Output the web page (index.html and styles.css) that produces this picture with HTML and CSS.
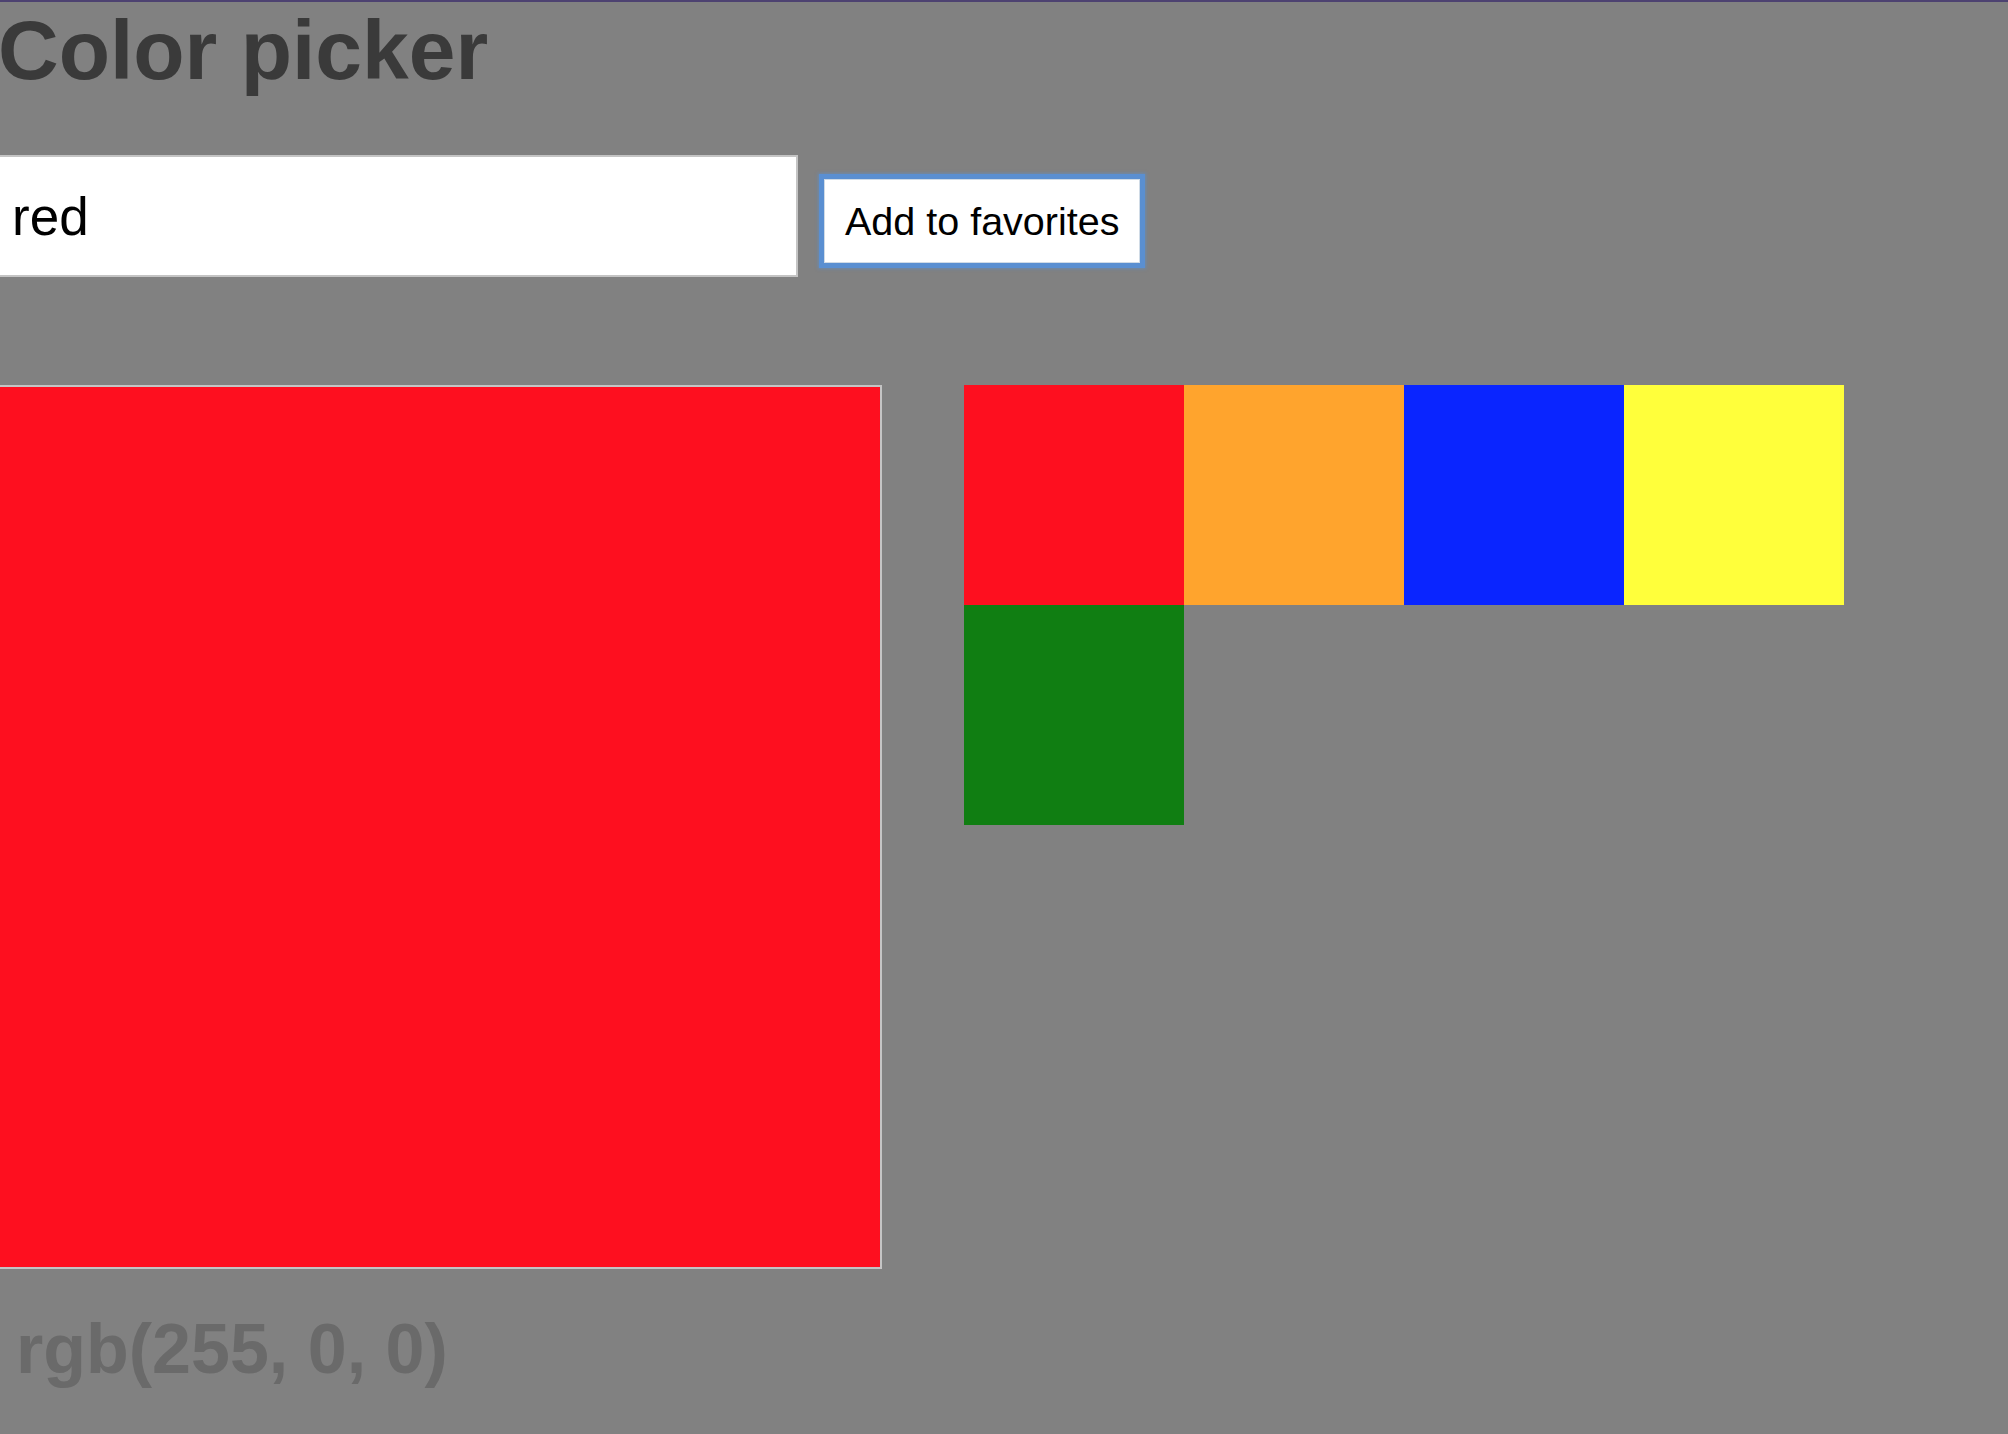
FILE: index.html
```html
<!DOCTYPE html>
<html>
<head>
<meta charset="utf-8">
<title>Color picker</title>
<link rel="stylesheet" href="styles.css">
</head>
<body>
<div class="app">
  <h1 class="title">Color picker</h1>
  <div class="controls">
    <input class="color-input" type="text" value="red">
    <button class="fav-button">Add to favorites</button>
  </div>
  <div class="main">
    <div class="preview"></div>
    <div class="swatches">
      <div class="swatch swatch-red"></div>
      <div class="swatch swatch-orange"></div>
      <div class="swatch swatch-blue"></div>
      <div class="swatch swatch-yellow"></div>
      <div class="swatch swatch-green"></div>
    </div>
  </div>
  <div class="rgb-value">rgb(255, 0, 0)</div>
</div>
</body>
</html>
```
FILE: styles.css
```css
html, body {
  margin: 0;
  padding: 0;
}
body {
  background: #818181;
  border-top: 2px solid #4d4271;
  min-height: 1432px;
  overflow: hidden;
  font-family: "Liberation Sans", Arial, sans-serif;
}
.app {
  margin-left: -2px;
}
.title {
  margin: 0;
  font-size: 84px;
  font-weight: bold;
  line-height: normal;
  color: #3a3a3a;
}
.controls {
  display: flex;
  align-items: baseline;
  margin-top: 56px;
}
.color-input {
  box-sizing: border-box;
  width: 800px;
  height: 122px;
  margin: 0;
  padding: 0 0 0 12px;
  border: 2px solid #c4c4c4;
  background: #fff;
  color: #000;
  font-family: "Liberation Sans", Arial, sans-serif;
  font-size: 53px;
  outline: none;
}
.fav-button {
  box-sizing: border-box;
  height: 84px;
  margin: 0 0 0 26px;
  padding: 0 20px;
  border: 1px solid #d0dbe6;
  background: #fff;
  color: #000;
  font-family: "Liberation Sans", Arial, sans-serif;
  font-size: 39.5px;
  box-shadow: 0 0 0 5px #5a8fd1, 0 0 3px 6px rgba(90, 143, 209, 0.55);
}
.main {
  display: flex;
  align-items: flex-start;
  gap: 82px;
  margin-top: 108px;
}
.preview {
  box-sizing: border-box;
  width: 884px;
  height: 884px;
  border: 2px solid #c4c4c4;
  background: #fe0f1f;
  flex: none;
}
.swatches {
  display: grid;
  grid-template-columns: repeat(4, 220px);
  grid-auto-rows: 220px;
}
.swatch-red { background: #fe0f1f; }
.swatch-orange { background: #ffa42d; }
.swatch-blue { background: #0a25ff; }
.swatch-yellow { background: #ffff3b; }
.swatch-green { background: #107e12; }
.rgb-value {
  margin-top: 40px;
  padding-left: 18px;
  font-size: 70px;
  font-weight: bold;
  line-height: normal;
  color: #6a6a6a;
}
```
